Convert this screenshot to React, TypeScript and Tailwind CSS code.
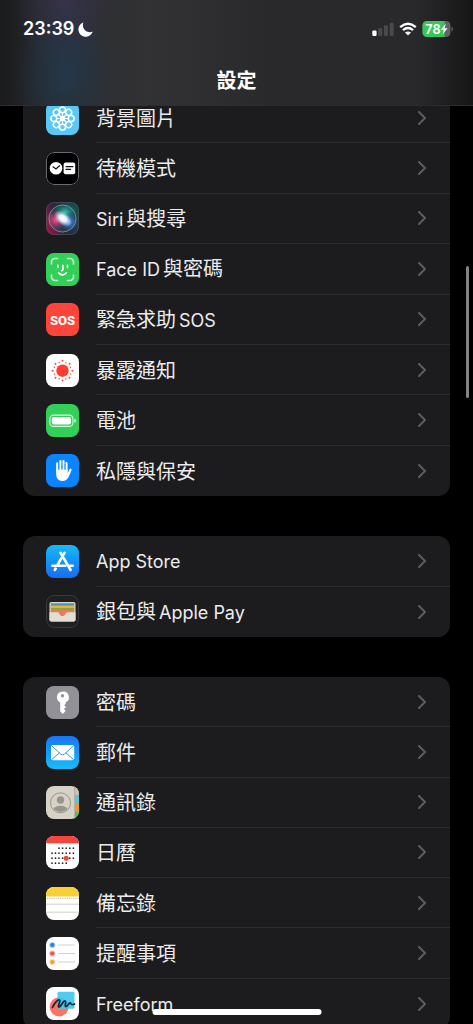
import React from "react";

const LATIN = "font-['Inter','Noto_Sans_CJK_TC',sans-serif]";

type IconProps = { children: React.ReactNode; className: string };

function Tile({ children, className }: IconProps) {
  return (
    <span className={`relative block size-[33px] shrink-0 overflow-hidden rounded-lg ${className}`}>
      <svg viewBox="0 0 33 33" className="block size-full" fill="none" aria-hidden="true">
        {children}
      </svg>
    </span>
  );
}

const around = (n: number) => Array.from({ length: n }, (_, i) => (i * 360) / n);

const Wallpaper = () => (
  <Tile className="bg-[#5ac8f5]">
    <g stroke="#fff" strokeWidth="1.5">
      {around(8).map((a) => (
        <ellipse key={a} cx="16.5" cy="7.8" rx="3" ry="2.9" transform={`rotate(${a} 16.5 16.5)`} />
      ))}
      {around(8).map((a) => (
        <path key={a} d="M16.5 16.5V10.800" strokeWidth="1.2" transform={`rotate(${a} 16.5 16.5)`} />
      ))}
      <circle cx="16.5" cy="16.5" r="1.8" fill="#fff" />
    </g>
  </Tile>
);

const Standby = () => (
  <Tile className="bg-black">
    <rect x=".5" y=".5" width="32" height="32" rx="7.5" stroke="#6b6b6e" />
    <circle cx="10" cy="16.3" r="6.3" fill="#fff" />
    <path d="M7 14.8l3 2.200 3.500-3.300" stroke="#111" strokeWidth="1.2" strokeLinecap="round" />
    <rect x="17.6" y="10.5" width="11.6" height="11.8" rx="2" fill="#fff" />
    <path d="M20 14.6h7M20 17.4h4.6" stroke="#111" strokeWidth="1.1" strokeLinecap="round" />
  </Tile>
);

const Siri = () => (
  <Tile className="bg-[#25142d]">
    <defs>
      <linearGradient id="siriBg" x1="0" y1="24" x2="33" y2="10" gradientUnits="userSpaceOnUse">
        <stop stopColor="#8a1b48" /><stop offset=".42" stopColor="#2d263c" /><stop offset="1" stopColor="#144c4c" />
      </linearGradient>
      <radialGradient id="siriPink"><stop stopColor="#ff4f91" /><stop offset="1" stopColor="#d42c70" stopOpacity="0" /></radialGradient>
      <radialGradient id="siriBlue"><stop stopColor="#5b9cff" /><stop offset="1" stopColor="#315dc4" stopOpacity="0" /></radialGradient>
      <radialGradient id="siriTeal"><stop stopColor="#2fc8b0" /><stop offset="1" stopColor="#148272" stopOpacity="0" /></radialGradient>
      <radialGradient id="siriWhite"><stop stopColor="#fff" /><stop offset=".4" stopColor="#e6f4ff" /><stop offset="1" stopColor="#b8dfff" stopOpacity="0" /></radialGradient>
    </defs>
    <rect width="33" height="33" fill="url(#siriBg)" />
    <circle cx="16.5" cy="16.5" r="13.5" fill="#254556" fillOpacity=".65" />
    <ellipse cx="19" cy="10" rx="12" ry="9" fill="url(#siriTeal)" />
    <ellipse cx="10" cy="18" rx="11" ry="10" fill="url(#siriPink)" />
    <ellipse cx="23" cy="20" rx="9" ry="9" fill="url(#siriBlue)" />
    <ellipse cx="17" cy="16.5" rx="10" ry="6.500" fill="url(#siriWhite)" transform="rotate(38 17 16.5)" />
    <circle cx="16.5" cy="16.5" r="13.5" stroke="#9dbdc0" strokeOpacity=".6" />
    <rect x=".5" y=".5" width="32" height="32" rx="7.5" stroke="#54545a" strokeOpacity=".6" />
  </Tile>
);

const FaceId = () => (
  <Tile className="bg-[#33d059]">
    <g stroke="#fff" strokeWidth="1.7" strokeLinecap="round">
      <path stroke="#b9f3c6" d="M5.500 11V9A3.500 3.500 0 0 1 9 5.500H11.500M21.500 5.500H24A3.500 3.500 0 0 1 27.500 9V11M27.500 22v2a3.500 3.500 0 0 1-3.500 3.500H21.500M11.500 27.500H9A3.500 3.500 0 0 1 5.500 24V22" />
      <path d="M11.800 12.300v2M21.500 12.300v2M16.900 12.300v4.300q0 1-1.300 1M12.700 20q4 3.600 7.600 0" />
    </g>
  </Tile>
);

const Sos = () => (
  <Tile className="bg-[#ff453a]">
    <text x="16.5" y="21.500" textAnchor="middle" fill="#fff" fontFamily="Roboto, sans-serif" fontSize="13" fontWeight="800">SOS</text>
  </Tile>
);

const Exposure = () => (
  <Tile className="bg-white">
    <circle cx="16.5" cy="16.700" r="6.200" fill="#ff3b30" />
    {around(16).map((a, i) => (
      <circle key={a} cx="16.5" cy={i % 2 ? 8 : 6.8} r={i % 2 ? 0.75 : 1} fill="#ff4a40" transform={`rotate(${a} 16.5 16.7)`} />
    ))}
  </Tile>
);

const Battery = () => (
  <Tile className="bg-[#33d059]">
    <rect x="3.900" y="11.100" width="23" height="11.300" rx="3.700" stroke="#d3f7db" strokeWidth="1.100" />
    <rect x="5.800" y="13" width="19.200" height="7.500" rx="2" fill="#fff" />
    <path d="M28.300 14.600q1.600.6 1.600 2.100t-1.600 2.100z" fill="#d3f7db" />
  </Tile>
);

const Privacy = () => (
  <Tile className="bg-[#0a84ff]">
    <g stroke="#fff" strokeWidth="2.100" strokeLinecap="round">
      <path d="M11.200 17V9.200M14.400 16V7M17.500 16V7M20.500 17V9M22 20.500l2.500-4.800" />
    </g>
    <path d="M10.150 15.500h11.400v3.500l1.500-.8 2.200-1.800q-.8 2.800-2.200 5.600-2 5-6.700 5-6.200 0-6.200-7.500z" fill="#fff" />
    <path d="M12.800 10v6M15.950 9v6.500M19 10v6" stroke="#0a84ff" strokeWidth=".6" />
  </Tile>
);

const AppStore = () => (
  <Tile className="bg-linear-to-b from-[#1cb8f8] to-[#1a6cf0]">
    <g stroke="#fff" strokeWidth="2.600" strokeLinecap="round">
      <path d="M18.500 7.800L11.900 19.200M14.600 7.800L24.600 25M6.300 20.800H19.200M24 20.800H26.700M9.700 23.500L8.800 25" />
    </g>
  </Tile>
);

const Wallet = () => (
  <Tile className="bg-[#202022]">
    <rect x=".5" y=".5" width="32" height="32" rx="7.500" stroke="#3a3a3d" />
    <clipPath id="walletClip"><rect x="3.500" y="7" width="26" height="19.500" rx="1.800" /></clipPath>
    <g clipPath="url(#walletClip)">
      <path fill="#dcd7ca" d="M3 6h27v21H3z" />
      <path fill="#4d93b7" d="M4.800 8.300h23.400v5H4.800z" />
      <path fill="#e6b33c" d="M4.800 10.600h23.400v4H4.800z" />
      <path fill="#8aa63c" d="M4.800 12.900h23.400v4H4.800z" />
      <path fill="#e87b62" d="M4.800 15.200h23.400v6H4.800z" />
      <path fill="#e3ded3" d="M3 17.200h8.500c2 0 2 3.900 5 3.900s3-3.900 5-3.900H30V27H3z" />
    </g>
  </Tile>
);

const Key = () => (
  <Tile className="bg-[#929197]">
    <path fill="#fff" fillRule="evenodd" d="M16.500 5.700a5.600 5.600 0 0 0-2.300 10.700v8.800l2.500 2.700 2.900-3-1.600-1.800 2-2-1.800-1.900 1.500-1.500v-1.400A5.600 5.600 0 0 0 16.500 5.700zm0 2.300a1.700 1.700 0 1 1 0 3.400 1.700 1.700 0 0 1 0-3.400z" />
  </Tile>
);

const Mail = () => (
  <Tile className="bg-linear-to-b from-[#1c75f4] to-[#1bbcfa]">
    <rect x="5" y="9" width="23.200" height="15.300" rx="1.800" fill="#fff" />
    <path d="M5.500 9.600l9.300 8.600q1.800 1.500 3.600 0l9.300-8.600M5.500 23.700l8-7M27.700 23.700l-8-7" stroke="#3797e8" strokeWidth="1" />
  </Tile>
);

const Contacts = () => (
  <Tile className="bg-[#d7d2c6]">
    <path fill="#c7c1b4" d="M28.300 0H33v9h-4.700z" />
    <path fill="#63c1dc" d="M29 9h4v8h-4z" />
    <path fill="#ed9b22" d="M29 17h4v8.500h-4z" />
    <path fill="#54bd55" d="M29 25.500h4V33h-4z" />
    <path d="M28.600 0v33" stroke="#aaa598" strokeWidth=".8" />
    <clipPath id="personClip"><circle cx="14.500" cy="16.800" r="9.200" /></clipPath>
    <circle cx="14.500" cy="16.800" r="10" stroke="#99958d" />
    <g clipPath="url(#personClip)" fill="#99958d">
      <circle cx="14.500" cy="14" r="3.700" />
      <ellipse cx="14.500" cy="24.500" rx="7.600" ry="4.700" />
    </g>
  </Tile>
);

const calendarRows = [
  { y: 12.2, xs: [13, 16.6, 20.2, 23.8, 27.4] },
  { y: 17.2, xs: [6, 9.500, 13, 16.600, 20.200, 23.800, 27.400] },
  { y: 22.2, xs: [6, 9.500, 13, 16.600, 23.800, 27.400] },
  { y: 27.2, xs: [6, 9.500, 13, 16.600, 20.200] },
];

const Calendar = () => (
  <Tile className="bg-white">
    <path fill="#f8443b" d="M0 0h33v7.300H0z" />
    {calendarRows.map((r) => r.xs.map((x) => <circle key={`${r.y}-${x}`} cx={x} cy={r.y} r=".85" fill="#282828" />))}
    <circle cx="20.200" cy="22.200" r="2.500" fill="#f8443b" />
  </Tile>
);

const Notes = () => (
  <Tile className="bg-[#fefefc]">
    <path fill="#f9cf35" d="M0 0h33v9.500H0z" />
    <path d="M1 11.300h32" stroke="#aaa" strokeWidth="1" strokeDasharray="1 1.200" />
    <path d="M0 17.200h33M0 25.200h33" stroke="#d0d0cf" strokeWidth="1" />
  </Tile>
);

const reminderRows = [
  { y: 8, color: "#2183df" },
  { y: 16.5, color: "#e9564a" },
  { y: 25, color: "#f4a02c" },
];

const Reminders = () => (
  <Tile className="bg-white">
    {reminderRows.map((r) => (
      <g key={r.y}>
        <circle cx="6.300" cy={r.y} r="3.100" fill={r.color} fillOpacity=".4" />
        <circle cx="6.300" cy={r.y} r="2.100" fill={r.color} />
        <path d={`M12 ${r.y}h17`} stroke="#d0d0d2" />
      </g>
    ))}
  </Tile>
);

const Freeform = () => (
  <Tile className="bg-white">
    <circle cx="13.200" cy="19.800" r="9.600" fill="#fb7564" />
    <rect x="11.500" y="4.700" width="17" height="17" rx="1.500" fill="#40c9ee" fillOpacity=".92" />
    <path d="M6.500 20.500c1.500-4 5.500-8.500 7-7.500s-2.500 7-.5 7 4-6.500 6-6-1 5.500 1 5.500 2.500-3.500 4-3.500 0 3 4.500 1" stroke="#18283e" strokeWidth="1.800" strokeLinecap="round" strokeLinejoin="round" />
  </Tile>
);

type Row = { label: { text: string; latin?: boolean }[]; Icon: () => React.ReactElement };

const system: Row[] = [
  { label: [{ text: "背景圖片" }], Icon: Wallpaper },
  { label: [{ text: "待機模式" }], Icon: Standby },
  { label: [{ text: "Siri", latin: true }, { text: "與搜尋" }], Icon: Siri },
  { label: [{ text: "Face ID", latin: true }, { text: "與密碼" }], Icon: FaceId },
  { label: [{ text: "緊急求助" }, { text: "SOS", latin: true }], Icon: Sos },
  { label: [{ text: "暴露通知" }], Icon: Exposure },
  { label: [{ text: "電池" }], Icon: Battery },
  { label: [{ text: "私隱與保安" }], Icon: Privacy },
];

const store: Row[] = [
  { label: [{ text: "App Store", latin: true }], Icon: AppStore },
  { label: [{ text: "銀包與" }, { text: "Apple Pay", latin: true }], Icon: Wallet },
];

const apps: Row[] = [
  { label: [{ text: "密碼" }], Icon: Key },
  { label: [{ text: "郵件" }], Icon: Mail },
  { label: [{ text: "通訊錄" }], Icon: Contacts },
  { label: [{ text: "日曆" }], Icon: Calendar },
  { label: [{ text: "備忘錄" }], Icon: Notes },
  { label: [{ text: "提醒事項" }], Icon: Reminders },
  { label: [{ text: "Freeform", latin: true }], Icon: Freeform },
];

function Group({ rows, className }: { rows: Row[]; className: string }) {
  return (
    <ul className={`grid shrink-0 auto-rows-fr overflow-hidden rounded-xl bg-[#1c1c1e] ${className}`}>
      {rows.map(({ label, Icon }, i) => (
        <li key={i} className="flex">
          <a href="#" className="flex min-w-0 flex-1 items-center pl-[23px]">
            <Icon />
            <span className={`ml-[17px] flex flex-1 items-center self-stretch pr-6 ${i < rows.length - 1 ? "border-b border-[#2c2c2f]" : ""}`}>
              <span className="flex flex-1 items-baseline gap-[3px] pt-[2px] leading-7 text-[#ececee]">
                {label.map((p) => (
                  <span key={p.text} className={p.latin ? "text-[18px]" : "text-[20px]"}>{p.text}</span>
                ))}
              </span>
              <svg viewBox="0 0 8 14" className="h-[14px] w-2" fill="none" stroke="#5d5d61" strokeWidth="2" strokeLinecap="round" strokeLinejoin="round" aria-hidden="true">
                <path d="M1 1l6 6-6 6" />
              </svg>
            </span>
          </a>
        </li>
      ))}
    </ul>
  );
}

function StatusBar() {
  return (
    <div className="flex items-center justify-between pt-[17px] pr-5 pl-[23px]">
      <div className="flex items-center gap-1">
        <span className="text-[18px] leading-6 font-semibold">23:39</span>
        <svg viewBox="0 0 15 15" className="size-[15px]" fill="#fff" aria-hidden="true">
          <path d="M5.400.5A7.300 7.300 0 1 0 14.700 9.600C13 10.600 9.500 10.600 7.300 8.600 4.900 6.400 4.300 3 5.400.5z" />
        </svg>
      </div>
      <div className="flex items-center gap-[5px]">
        <svg viewBox="0 0 22 14" className="h-[14px] w-[22px]" aria-hidden="true">
          <rect x=".3" y="8.500" width="4.300" height="5.500" rx="1.200" fill="#fff" />
          <g fill="#49494b">
            <rect x="6.200" y="6" width="4" height="8" rx="1.200" />
            <rect x="11.900" y="3.300" width="4" height="10.700" rx="1.200" />
            <rect x="17.700" y=".8" width="4" height="13.200" rx="1.200" />
          </g>
        </svg>
        <svg viewBox="0 0 18 14" className="h-[14px] w-[18px]" fill="none" aria-hidden="true">
          <path d="M1.200 5.100q7.800-6.700 15.600 0M4 8.200q5-4.200 10 0" stroke="#fff" strokeWidth="2.400" />
          <path d="M9 13.500L5.900 10.600q3.100-2.400 6.200 0z" fill="#fff" />
        </svg>
        <svg viewBox="0 0 31 16" className="h-4 w-[31px]" aria-label="78%">
          <clipPath id="charge"><rect x=".5" width="28" height="16" rx="4.500" /></clipPath>
          <g clipPath="url(#charge)">
            <path fill="#636366" d="M0 0h29v16H0z" />
            <path fill="#34c759" d="M0 0h22.500v16H0z" />
          </g>
          <path d="M29.500 5.500q1.500.6 1.500 2.500t-1.500 2.500z" fill="#636366" />
          <text x="3.300" y="12.700" fill="#fff" fontFamily="Inter, sans-serif" fontSize="12.500" fontWeight="700">78</text>
          <path d="M23.800 2.500l-5 6.300h3l-1.200 4.700 5-6.300h-3z" fill="#fff" />
        </svg>
      </div>
    </div>
  );
}

export default function App() {
  return (
    <div lang="zh-Hant" className={`relative flex h-dvh flex-col overflow-hidden bg-black text-white ${LATIN}`}>
      <header className="relative z-10 h-[106px] shrink-0 border-b border-[#2d2d2f] bg-[#29292b] bg-[radial-gradient(ellipse_50px_75px_at_65px_75px,#24384a_0%,transparent_100%),radial-gradient(ellipse_50px_75px_at_65px_0px,#37334b_0%,transparent_100%),linear-gradient(90deg,#1b1b1d_0%,#222426_6%,#2d2e31_20%,#323234_32%,#29292b_58%,#29292b_88%,#161617_100%)]">
        <StatusBar />
        <h1 className="mt-[26px] text-center text-[20px] leading-7 font-semibold">設定</h1>
      </header>
      <main className="-mt-[13px] flex min-h-0 flex-1 flex-col gap-10 overflow-y-auto px-[23px] [scrollbar-width:none]">
        <Group rows={system} className="min-h-[403px]" />
        <Group rows={store} className="min-h-[101px]" />
        <Group rows={apps} className="min-h-[352px]" />
      </main>
      <div className="absolute top-[266px] right-1 h-[132px] w-[3px] rounded-full bg-[#828284]" />
      <div className="absolute bottom-[9px] left-1/2 h-[6px] w-[169px] -translate-x-1/2 rounded-full bg-white" />
    </div>
  );
}
